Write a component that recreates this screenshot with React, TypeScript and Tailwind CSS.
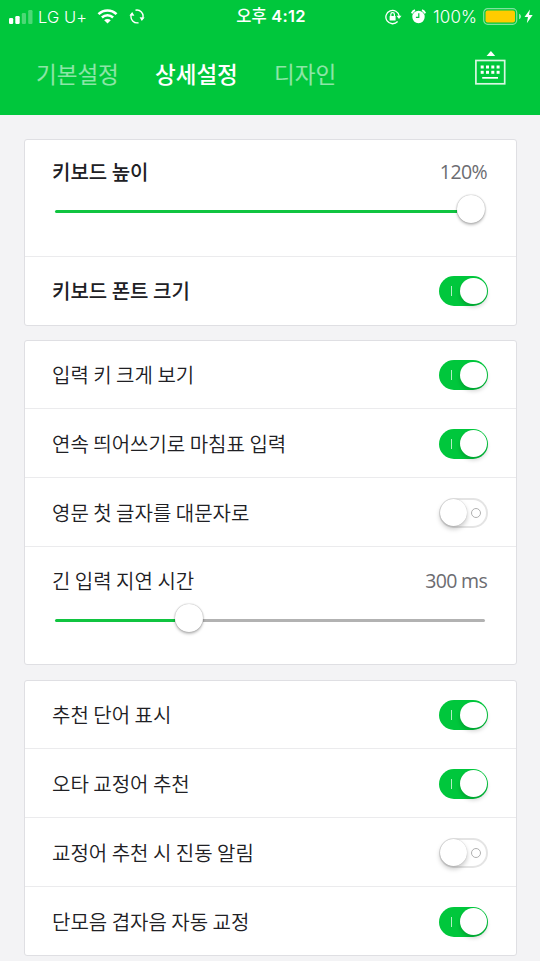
import type { ReactNode } from "react";

function StatusBar() {
  return (
    <div className="grid h-[30px] grid-cols-[1fr_auto_1fr] items-center text-[17px] leading-[30px] text-white">
      <div className="flex items-center pl-[9px]">
        <svg width="24" height="14" viewBox="0 0 24 14" fill="#fff">
          <rect x="0" y="8" width="4.2" height="6" rx="1.2" />
          <rect x="6.3" y="6" width="4.4" height="8" rx="1.2" />
          <rect x="12.8" y="3" width="4.2" height="11" rx="1.2" opacity=".3" />
          <rect x="19.2" y="0" width="4.3" height="14" rx="1.2" opacity=".3" />
        </svg>
        <span className="ml-[5px] w-[50px] whitespace-nowrap font-['Inter'] text-[16.5px] font-[350] tracking-[0.1px]">LG U+</span>
        <svg className="ml-[9px]" width="21" height="15" viewBox="0 0 20 15" fill="none" stroke="#fff">
          <path d="M1 5.2C6 .2 14 .2 19 5.2" strokeWidth="2.6" />
          <path d="M4.4 8.5c3.1-3 8.1-3 11.2 0" strokeWidth="2.5" />
          <path d="M10 14.5 6.7 11.3c1.9-1.8 4.7-1.8 6.6 0Z" fill="#fff" stroke="none" />
        </svg>
        <svg className="ml-[11px]" width="16" height="15" viewBox="0 0 16 15" fill="none" stroke="#fff" strokeWidth="1.4">
          <path d="M6.5 1.2A6.2 6.2 0 0 1 13.8 9M9.5 13.7A6.2 6.2 0 0 1 2.2 6" />
          <path d="m10.6 8.2 5 .2-2.8 3.5ZM5.4 6.8l-5-.2L3.2 3Z" fill="#fff" stroke="none" />
        </svg>
      </div>
      <div className="whitespace-nowrap pb-[2px] pl-[2px] text-[16.5px] font-medium tracking-[0.3px]">
        오후 <span className="font-['Inter'] font-semibold">4:12</span>
      </div>
      <div className="flex items-center justify-end pr-[7px]">
        <svg width="17" height="16" viewBox="0 0 17 16" fill="none" stroke="#fff" strokeWidth="1.3">
          <path d="M12.6 12.5A6.7 6.7 0 1 1 14.2 7" />
          <path d="M11.5 6.8h5l-2.5 3.3Z" fill="#fff" stroke="none" />
          <rect x="4.6" y="7" width="6" height="4.6" rx=".5" fill="#fff" stroke="none" />
          <path d="M5.8 7V5.5a1.8 1.8 0 0 1 3.6 0V7" strokeWidth="1.2" />
        </svg>
        <svg className="ml-[9px]" width="15" height="15" viewBox="0 0 15 15" fill="none">
          <circle cx="7.5" cy="8" r="6.2" fill="#fff" />
          <path d="M.8 4.3A6 6 0 0 1 4 1.2M11 1.2a6 6 0 0 1 3.2 3.1" stroke="#fff" strokeWidth="1.9" />
          <path d="M7.8 4.2v4.1H4.9" stroke="#00c73c" strokeWidth="1.2" />
        </svg>
        <span className="ml-[7px] w-[46px] whitespace-nowrap font-['Inter'] text-[17px] font-[350] tracking-[0.1px]">100%</span>
        <svg className="ml-[4px]" width="39" height="17" viewBox="0 0 39 17" fill="none">
          <rect x=".7" y=".7" width="33" height="15.6" rx="4" stroke="#fff" strokeOpacity=".5" strokeWidth="1.2" />
          <rect x="2.5" y="2.6" width="29.5" height="11.8" rx="2" fill="#ffcc00" />
          <path d="M36 5.7c2.8 1.3 2.8 4.3 0 5.6Z" fill="#fff" fillOpacity=".6" />
        </svg>
        <svg className="ml-[2px]" width="9" height="15" viewBox="0 0 9 15" fill="#fff">
          <path d="M6 .5.5 8H4L2.8 14.3 8.7 6H5Z" />
        </svg>
      </div>
    </div>
  );
}

function KeyboardIcon() {
  return (
    <svg width="32" height="34" viewBox="0 0 32 34" fill="#fff">
      <path d="m16.9 0 4.3 5h-8.600Z" />
      <rect x="1.9" y="9.5" width="28.8" height="23.3" fill="none" stroke="#fff" strokeOpacity=".85" strokeWidth="1.7" />
      {[6.7, 12, 17.3, 22.6].map((x) => (
        <g key={x}>
          <rect x={x} y="14.5" width="3" height="3" />
          <rect x={x} y="19.8" width="3" height="3" />
        </g>
      ))}
      <rect x="8.2" y="26" width="15.800" height="1.7" />
    </svg>
  );
}

function Toggle({ on }: { on: boolean }) {
  return on ? (
    <div className="flex h-[30px] w-[49px] items-center justify-between rounded-full bg-[#00c73c] pr-[1.5px] pl-[11.5px]">
      <div className="h-[10px] w-px bg-white/70" />
      <div className="h-[26.5px] w-[26.5px] rounded-full bg-white shadow-[0_3px_4px_rgba(0,0,0,0.18)]" />
    </div>
  ) : (
    <div className="flex h-[30px] w-[49px] items-center justify-between rounded-full border-2 border-[#e4e4e4] bg-white pr-[5.5px]">
      <div className="-ml-px h-[27px] w-[27px] shrink-0 rounded-full bg-white shadow-[0_3px_5px_rgba(0,0,0,0.22),0_0_1px_rgba(0,0,0,0.25)]" />
      <div className="h-[10px] w-[10px] rounded-full border-[1.5px] border-[#b0b0b0]" />
    </div>
  );
}

function Row({ label, on, bold = false }: { label: string; on: boolean; bold?: boolean }) {
  return (
    <div
      className={`flex h-[69px] items-center justify-between pr-[28px] pl-[27px] first:h-[68px] last:h-[68px] ${
        bold ? "font-medium" : "pt-px font-[350]"
      }`}
    >
      <span>{label}</span>
      <Toggle on={on} />
    </div>
  );
}

function SliderRow({ label, value, percent, bold = false }: { label: string; value: ReactNode; percent: number; bold?: boolean }) {
  return (
    <div className="h-[117px] pt-[17px] pr-[29px] pl-[27px] last:pt-[19px]">
      <div className="flex h-[30px] items-center justify-between">
        <span className={bold ? "font-medium" : "font-[350]"}>{label}</span>
        {value}
      </div>
      <div className="mt-[10px] mr-[2px] ml-[3px] flex h-[28px] items-center">
        <div className="h-[3px] rounded-l-full bg-[#10c440]" style={{ width: `calc(${percent}% - 14px)` }} />
        <div className="z-10 -mt-[4px] h-[28px] w-[28px] shrink-0 rounded-full bg-white shadow-[0_2px_3px_rgba(0,0,0,0.25),0_0_1.5px_rgba(0,0,0,0.4)]" />
        <div className="h-[3px] flex-1 rounded-r-full bg-[#b2b2b2]" />
      </div>
    </div>
  );
}

function Card({ children }: { children: ReactNode }) {
  return (
    <section className="divide-y divide-[#ebebed] rounded-[3px] border border-[#dfdfe3] bg-white">{children}</section>
  );
}

export default function App() {
  return (
    <div className="h-[961px] overflow-hidden bg-[#f3f3f5] font-['Noto_Sans_CJK_KR',sans-serif] text-[20px] leading-[30px] text-[#202024]">
      <header className="h-[115px] bg-[#00c73c]">
        <StatusBar />
        <div className="flex h-[85px] items-center pr-[34px] pl-[36px] text-[22.5px] text-white">
          <span className="w-[119px] text-white/55">기본설정</span>
          <span className="w-[119px] font-medium">상세설정</span>
          <span className="text-white/55">디자인</span>
          <div className="mb-[10px] ml-auto">
            <KeyboardIcon />
          </div>
        </div>
      </header>
      <main className="flex flex-col pt-[24px] pr-[23px] pl-[24px]">
        <Card>
          <SliderRow
            label="키보드 높이"
            value={<span className="font-['Open_Sans'] text-[19.5px] tracking-[-0.6px] text-[#6c6c71]">120%</span>}
            percent={96.9}
            bold
          />
          <Row label="키보드 폰트 크기" on bold />
        </Card>
        <div className="mt-[14px]">
          <Card>
            <Row label="입력 키 크게 보기" on />
            <Row label="연속 띄어쓰기로 마침표 입력" on />
            <Row label="영문 첫 글자를 대문자로" on={false} />
            <SliderRow
              label="긴 입력 지연 시간"
              value={<span className="font-['Open_Sans'] text-[19.5px] tracking-[-0.7px] text-[#6c6c71]">300 ms</span>}
              percent={31.2}
            />
          </Card>
        </div>
        <div className="mt-[15px]">
          <Card>
            <Row label="추천 단어 표시" on />
            <Row label="오타 교정어 추천" on />
            <Row label="교정어 추천 시 진동 알림" on={false} />
            <Row label="단모음 겹자음 자동 교정" on />
          </Card>
        </div>
      </main>
    </div>
  );
}
